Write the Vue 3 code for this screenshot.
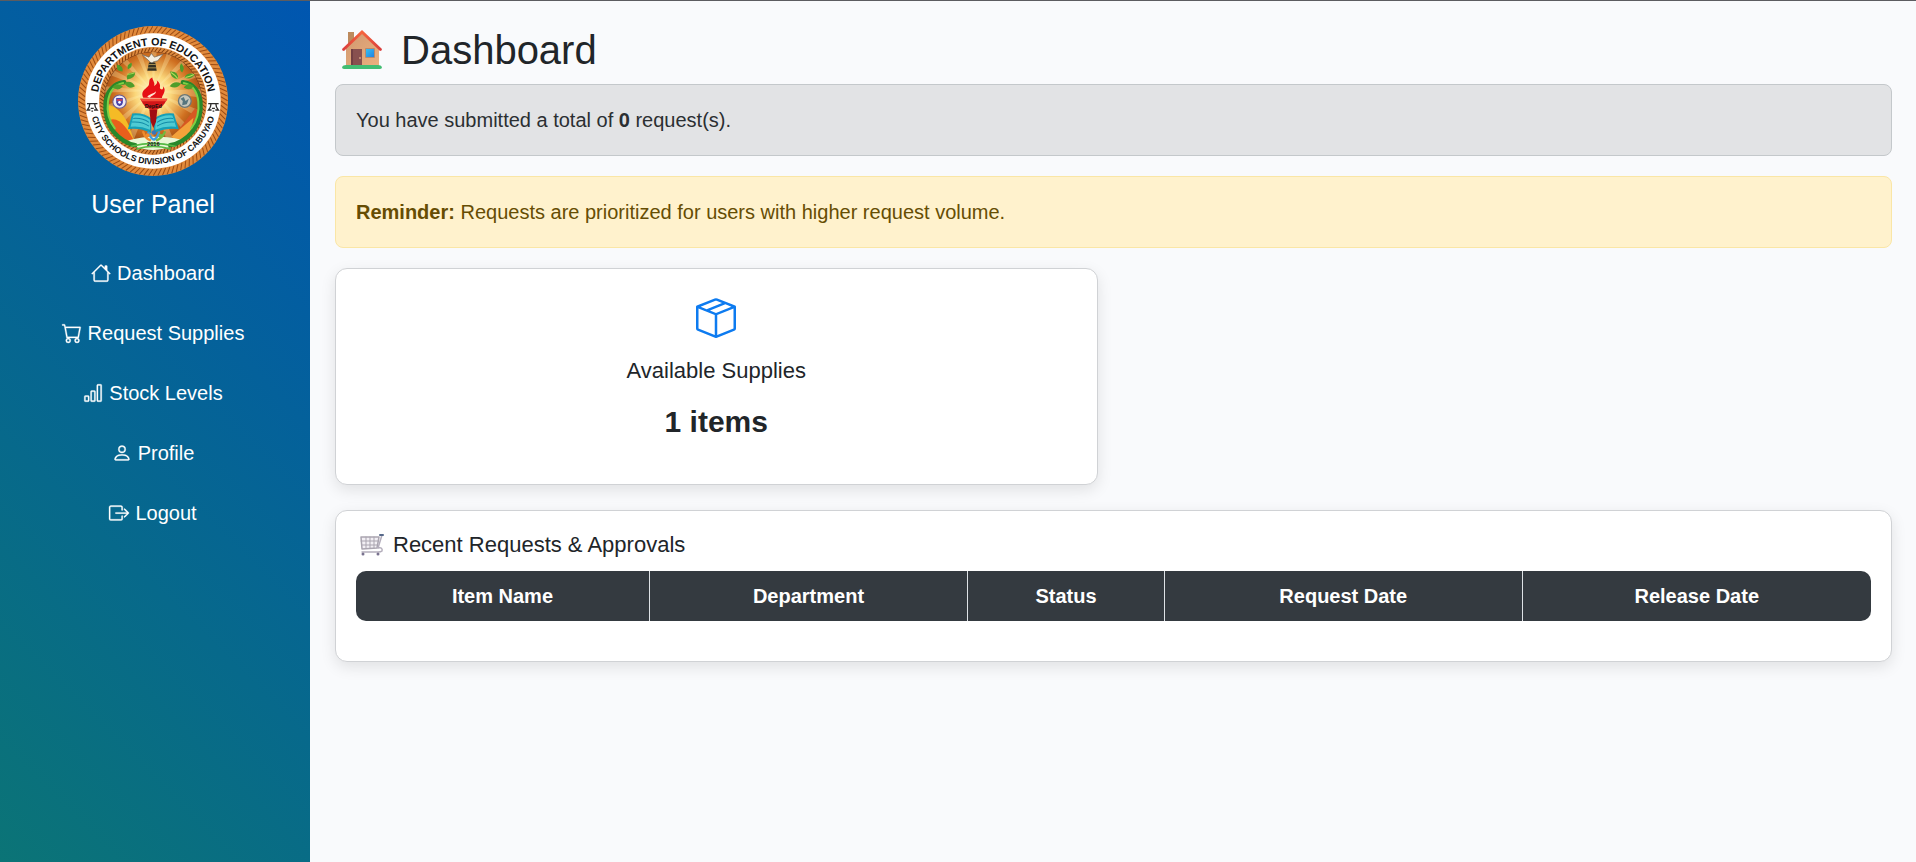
<script setup>
const links = [
  {
    label: 'Dashboard',
    icon: 'M8.707 1.5a1 1 0 0 0-1.414 0L.646 8.146a.5.5 0 0 0 .708.708L2 8.207V13.5A1.5 1.5 0 0 0 3.5 15h9a1.5 1.5 0 0 0 1.5-1.5V8.207l.646.647a.5.5 0 0 0 .708-.708L13 5.793V2.5a.5.5 0 0 0-.5-.5h-1a.5.5 0 0 0-.5.5v1.293zM13 7.207V13.5a.5.5 0 0 1-.5.5h-9a.5.5 0 0 1-.5-.5V7.207l5-5z',
  },
  {
    label: 'Request Supplies',
    icon: 'M0 1.5A.5.5 0 0 1 .5 1H2a.5.5 0 0 1 .485.379L2.89 3H14.5a.5.5 0 0 1 .491.592l-1.5 8A.5.5 0 0 1 13 12H4a.5.5 0 0 1-.491-.408L2.01 3.607 1.61 2H.5a.5.5 0 0 1-.5-.5M3.102 4l1.313 7h8.17l1.313-7zM5 12a2 2 0 1 0 0 4 2 2 0 0 0 0-4m7 0a2 2 0 1 0 0 4 2 2 0 0 0 0-4m-7 1a1 1 0 1 1 0 2 1 1 0 0 1 0-2m7 0a1 1 0 1 1 0 2 1 1 0 0 1 0-2',
  },
  {
    label: 'Stock Levels',
    icon: 'M4 11H2v3h2zm5-4H7v7h2zm5-5v12h-2V2zm-2-1a1 1 0 0 0-1 1v12a1 1 0 0 0 1 1h2a1 1 0 0 0 1-1V2a1 1 0 0 0-1-1zM6 7a1 1 0 0 1 1-1h2a1 1 0 0 1 1 1v7a1 1 0 0 1-1 1H7a1 1 0 0 1-1-1zm-5 4a1 1 0 0 1 1-1h2a1 1 0 0 1 1 1v3a1 1 0 0 1-1 1H2a1 1 0 0 1-1-1z',
  },
  {
    label: 'Profile',
    icon: 'M8 8a3 3 0 1 0 0-6 3 3 0 0 0 0 6m2-3a2 2 0 1 1-4 0 2 2 0 0 1 4 0m4 8c0 1-1 1-1 1H3s-1 0-1-1 1-4 6-4 6 3 6 4m-1-.004c-.001-.246-.154-.986-.832-1.664C11.516 10.68 10.289 10 8 10s-3.516.68-4.168 1.332c-.678.678-.83 1.418-.832 1.664z',
  },
  {
    label: 'Logout',
    icon: 'M10 12.5a.5.5 0 0 1-.5.5h-8a.5.5 0 0 1-.5-.5v-9a.5.5 0 0 1 .5-.5h8a.5.5 0 0 1 .5.5v2a.5.5 0 0 0 1 0v-2A1.5 1.5 0 0 0 9.5 2h-8A1.5 1.5 0 0 0 0 3.5v9A1.5 1.5 0 0 0 1.5 14h8a1.5 1.5 0 0 0 1.5-1.5v-2a.5.5 0 0 0-1 0zM15.854 8.354a.5.5 0 0 0 0-.708l-3-3a.5.5 0 0 0-.708.708L14.293 7.5H5.5a.5.5 0 0 0 0 1h8.793l-2.147 2.146a.5.5 0 0 0 .708.708z',
  },
]

const columns = [
  { label: 'Item Name', share: 'w-item' },
  { label: 'Department', share: 'w-dept' },
  { label: 'Status', share: 'w-status' },
  { label: 'Request Date', share: 'w-request' },
  { label: 'Release Date', share: 'w-release' },
]
const requestCount = 0
const itemCount = 1

// Slanted strands of the two rope rings on the seal
function strands(count, inner, outer, twist) {
  let d = ''
  for (let i = 0; i < count; i++) {
    const a = (i / count) * Math.PI * 2
    const b = a + twist
    d += `M${(249 + Math.cos(a) * inner).toFixed(1)} ${(254 + Math.sin(a) * inner).toFixed(1)}L${(249 + Math.cos(b) * outer).toFixed(1)} ${(254 + Math.sin(b) * outer).toFixed(1)}`
  }
  return d
}
const outerRope = strands(100, 203, 223, 0.06)
const innerRope = strands(90, 147, 159, 0.05)
</script>

<template>
  <div class="layout">
    <aside class="sidebar">
      <svg class="seal" viewBox="25 30 448 448" role="img" aria-label="Division seal">
        <defs>
          <radialGradient id="glow" cx="0.5" cy="0.42" r="0.6">
            <stop offset="0" stop-color="#fffbe0" />
            <stop offset="0.3" stop-color="#fbd77b" />
            <stop offset="0.65" stop-color="#cf6f20" />
            <stop offset="1" stop-color="#7b360b" />
          </radialGradient>
          <clipPath id="disc"><circle cx="249" cy="254" r="146" /></clipPath>
          <path id="arc-top" d="M83 254A166 166 0 0 1 415 254" />
          <path id="arc-bottom" d="M60 254A189 189 0 0 0 438 254" />
        </defs>
        <circle cx="249" cy="254" r="224" fill="#e18a3c" />
        <path :d="outerRope" stroke="#9c4c14" stroke-width="3" />
        <circle cx="249" cy="254" r="202" fill="#fff" />
        <circle cx="249" cy="254" r="161" fill="#dd8a3f" />
        <path :d="innerRope" stroke="#84400f" stroke-width="3" />
        <circle cx="249" cy="254" r="147" fill="#6b3010" />
        <g clip-path="url(#disc)">
          <circle cx="249" cy="254" r="146" fill="url(#glow)" />
          <circle cx="249" cy="225" r="90" fill="none" stroke="#fff3b4" stroke-opacity="0.3" stroke-width="180" stroke-dasharray="12 23" />
          <path d="M104 268C130 260 158 285 178 330L195 378L150 380L104 325Z" fill="#f5bb26" />
          <path d="M120 310C150 300 175 340 194 376L166 374C142 362 128 342 120 310Z" fill="#e95f1c" />
          <path d="M298 375L375 276L400 292L374 350L322 392Z" fill="#d65822" />
          <path d="M304 360L370 304L360 350L326 382Z" fill="#f3a23a" />
          <path d="M160 378C205 356 294 356 342 372L320 400H180Z" fill="#e9f7d5" />
        </g>
        <g fill="none" stroke-linecap="round">
          <path d="M163 198C95 205 93 300 133 348C148 367 175 383 196 386" stroke="#28882a" stroke-width="13" />
          <path d="M160 200C106 211 101 292 135 336" stroke="#80d044" stroke-width="6" />
          <path d="M338 198C404 205 404 300 365 348C350 367 323 383 300 386" stroke="#28882a" stroke-width="13" />
          <path d="M341 200C394 211 396 292 363 336" stroke="#80d044" stroke-width="6" />
          <path d="M185 389Q249 372 315 389M202 397Q249 382 300 397" stroke="#56b946" stroke-width="5" />
        </g>
        <g fill="#4e9d2a">
          <path d="M172 190Q166 166 196 169Q196 186 172 190ZM158 166Q136 165 142 145Q162 150 158 166ZM128 214Q140 195 159 211Q146 226 128 214ZM163 200Q184 190 195 210Q177 222 163 200ZM174 159Q169 145 185 140Q189 155 174 159Z" />
          <path d="M324 188Q303 188 300 166Q325 164 324 188ZM336 169Q324 157 333 141Q347 154 336 169ZM343 184Q351 166 374 174Q361 193 343 184ZM299 210Q312 191 333 202Q320 221 299 210ZM341 214Q354 195 371 210Q358 226 341 214Z" />
        </g>
        <path d="M172 174Q184 174 194 170M303 169Q314 176 323 187M346 184Q360 181 371 175" fill="none" stroke="#b7df59" stroke-width="3" />
        <!-- bird and bell -->
        <path d="M217 116L237 123L244 112L253 123L279 114L263 134L250 137L247 145L239 136Z" fill="#f3eee0" stroke="#6c665e" stroke-width="2" />
        <path d="M237 139H256L260 164H232Z" fill="#333024" />
        <path d="M236 145H257M234 155H259" stroke="#ddbd64" stroke-width="2" />
        <!-- small seals -->
        <circle cx="149" cy="256" r="20" fill="#eee9f4" stroke="#68598e" stroke-width="3" />
        <path d="M139 245H159V259Q158 267 149 270Q140 267 139 259Z" fill="#4843ab" />
        <path d="M141 251H157" stroke="#d44352" stroke-width="5" />
        <circle cx="149" cy="258" r="4" fill="#fff" />
        <circle cx="344" cy="254" r="19" fill="#c7c7bc" stroke="#6d7775" stroke-width="4" />
        <path d="M331 247L341 242L346 254L356 247L350 264L336 267L338 254Z" fill="#56757e" />
        <!-- open book -->
        <path d="M187 291Q222 288 244 306V350Q211 334 174 338Z" fill="#159fb7" />
        <path d="M311 291Q276 288 252 306V350Q286 334 326 338Z" fill="#159fb7" />
        <path d="M191 297Q220 294 240 310V340Q210 327 182 331ZM307 297Q278 294 256 310V340Q286 327 318 331Z" fill="#50cbd3" />
        <path d="M190 306Q218 304 237 318M186 317Q215 314 237 329M309 306Q282 304 261 318M313 317Q284 314 261 329" fill="none" stroke="#128ba7" stroke-width="3" />
        <!-- torch -->
        <path d="M238 279H262L258 316L250 335L242 316Z" fill="#a10d12" />
        <path d="M211 247H292L284 261Q272 280 250 281Q228 278 218 261Z" fill="#d21618" />
        <path d="M211 247H292L288 255H215Z" fill="#f34a35" />
        <path d="M220 244C209 221 235 216 237 204C239 194 236 188 247 184C247 192 257 201 252 209C262 204 263 197 260 192C279 207 263 216 274 219C280 222 281 211 277 208C294 223 274 239 276 245Z" fill="#e61014" />
        <path d="M232 242C236 234 250 233 258 225C257 236 246 236 240 244Z" fill="#ffe5d2" />
        <text x="250" y="276" text-anchor="middle" class="tiny">DepEd</text>
        <!-- people -->
        <g fill="none" stroke-width="7" stroke-linecap="round">
          <path d="M220 347Q226 366 240 371" stroke="#ef8b2b" />
          <path d="M235 349Q245 370 252 369Q260 367 267 348" stroke="#3d9ee3" />
          <path d="M284 347Q276 364 261 371" stroke="#73b83e" />
        </g>
        <circle cx="233" cy="356" r="6" fill="#ef8b2b" />
        <circle cx="252" cy="348" r="7" fill="#3975bd" />
        <circle cx="272" cy="358" r="6" fill="#73b83e" />
        <text x="250" y="389" text-anchor="middle" class="year">2016</text>
        <!-- bells on the white band -->
        <g fill="none" stroke="#302e2d" stroke-width="4">
          <path d="M52 262H83M60 264Q60 273 53 281H62M75 264Q75 273 82 281H73M63 276H72M65 284H70" />
          <path d="M414 262H445M422 264Q422 273 415 281H424M437 264Q437 273 444 281H435M425 276H434M427 284H432" />
        </g>
        <text class="ring ring-top" text-anchor="middle">
          <textPath href="#arc-top" startOffset="50%">DEPARTMENT OF EDUCATION</textPath>
        </text>
        <text class="ring ring-bottom" text-anchor="middle">
          <textPath href="#arc-bottom" startOffset="50%">CITY SCHOOLS DIVISION OF CABUYAO</textPath>
        </text>
      </svg>
      <h2 class="panel-name">User Panel</h2>
      <nav class="nav">
        <a v-for="link in links" :key="link.label" href="#" class="nav-link">
          <svg class="nav-icon" viewBox="0 0 16 16" aria-hidden="true"><path :d="link.icon" /></svg>
          <span>{{ link.label }}</span>
        </a>
      </nav>
    </aside>

    <main class="main">
      <h1 class="title">
        <svg class="house" viewBox="0 0 40 40" aria-hidden="true">
          <defs>
            <linearGradient id="wall" x1="0" x2="1" y1="0" y2="1">
              <stop offset="0" stop-color="#cf9870" />
              <stop offset="1" stop-color="#eeb17f" />
            </linearGradient>
            <linearGradient id="roof" x1="0" x2="1">
              <stop offset="0" stop-color="#d93b3c" />
              <stop offset="0.5" stop-color="#f5653d" />
              <stop offset="1" stop-color="#d83a3b" />
            </linearGradient>
            <linearGradient id="pane" x1="0" x2="1" y1="0" y2="1">
              <stop offset="0" stop-color="#35c0f2" />
              <stop offset="1" stop-color="#2382e2" />
            </linearGradient>
          </defs>
          <path d="M6 2H12V16H6Z" fill="#bd8a5d" />
          <path d="M4 18L20 3L37 19V37H4Z" fill="url(#wall)" />
          <path d="M0 19L20 0L40 19Q40 21 38 21L20 4L2 21Q0 21 0 19Z" fill="url(#roof)" />
          <path d="M9 19H20V36H9Z" fill="#88504f" />
          <path d="M9 19H11V36H9Z" fill="#713f43" />
          <circle cx="18" cy="28" r="1" fill="#d29c80" />
          <rect x="23" y="18" width="10" height="10" rx="1" fill="#b9896c" />
          <rect x="24" y="19" width="8" height="8" fill="url(#pane)" />
          <path d="M0 37Q1 35 4 35H36Q39 35 40 37Q40 39 38 39H2Q0 39 0 37Z" fill="#43bd73" />
        </svg>
        Dashboard
      </h1>

      <div class="alert alert-secondary" role="alert">
        You have submitted a total of <strong>{{ requestCount }}</strong> request(s).
      </div>
      <div class="alert alert-warning" role="alert">
        <strong>Reminder:</strong> Requests are prioritized for users with higher request volume.
      </div>

      <div class="stats">
        <section class="card stat">
          <svg class="box" viewBox="0 0 16 16" aria-hidden="true">
            <path d="M8.186 1.113a.5.5 0 0 0-.372 0L1.846 3.5l2.404.961L10.404 2zm3.564 1.426L5.596 5 8 5.961 14.154 3.5zm3.25 1.7-6.5 2.6v7.922l6.5-2.6V4.24zM7.5 14.762V6.838L1 4.239v7.923zM7.443.184a1.5 1.5 0 0 1 1.114 0l7.129 2.852A.5.5 0 0 1 16 3.5v8.662a1 1 0 0 1-.629.928l-7.185 2.874a.5.5 0 0 1-.372 0L.63 13.09a1 1 0 0 1-.63-.928V3.5a.5.5 0 0 1 .314-.464z" />
          </svg>
          <h2 class="stat-title">Available Supplies</h2>
          <p class="stat-value">{{ itemCount }} items</p>
        </section>
      </div>

      <section class="card requests">
        <h2 class="requests-title">
          <svg class="cart" viewBox="0 0 24 24" aria-hidden="true">
            <g fill="none" stroke-linecap="round" stroke-linejoin="round">
              <path d="M1 4H19L17 15L2 16Z" fill="#f2eff4" stroke="#aaa5b0" stroke-width="1.5" />
              <path d="M1 8H18M2 12H17M6 4V15M10 4V15M14 4V15" stroke="#aaa5b0" />
              <path d="M22 2L18 15Q23 14 22 18Q21 19 18 19H2" stroke="#b4aebc" stroke-width="1.5" />
              <path d="M20 2H23" stroke="#56698a" stroke-width="2" />
            </g>
            <circle cx="3" cy="21" r="1.5" fill="#79728f" />
            <circle cx="18" cy="21" r="1.5" fill="#79728f" />
          </svg>
          Recent Requests &amp; Approvals
        </h2>
        <table class="table">
          <thead>
            <tr>
              <th v-for="col in columns" :key="col.label" scope="col" :class="col.share">{{ col.label }}</th>
            </tr>
          </thead>
        </table>
      </section>
    </main>
  </div>
</template>

<style>
body {
  margin: 0;
  background: #f8f9fa;
}
</style>

<style scoped>
* {
  box-sizing: border-box;
}
.layout {
  display: flex;
  box-sizing: border-box;
  min-height: 100vh;
  border-top: 1px solid #5c5c60;
  background: #f9fafc;
  color: #212529;
  font-family: Arial, "Liberation Sans", sans-serif;
  font-size: 20px;
  line-height: 30px;
}
.sidebar {
  display: flex;
  flex: none;
  flex-direction: column;
  align-items: center;
  width: 310px;
  padding: 25px 4px 25px 0;
  background: linear-gradient(45deg, #0b7476, #0056b0);
  color: #fff;
}
.seal {
  width: 150px;
  height: 150px;
}
.ring,
.tiny,
.year {
  font-weight: 700;
  fill: #111;
}
.ring-top {
  font-size: 32px;
}
.ring-bottom {
  font-size: 26px;
}
.tiny {
  font-size: 16px;
}
.year {
  font-size: 17px;
}
.panel-name {
  margin: 13px 0 24px;
  font-size: 25px;
  font-weight: 400;
  line-height: 30px;
}
.nav {
  display: flex;
  flex-direction: column;
  width: 100%;
}
.nav-link {
  display: flex;
  align-items: center;
  justify-content: center;
  gap: 6px;
  padding: 15px;
  color: #fff;
  text-decoration: none;
}
.nav-icon {
  width: 20px;
  height: 20px;
  overflow: visible;
  fill: currentColor;
  stroke: currentColor;
  stroke-width: 0.25;
}
.main {
  flex: 1;
  min-width: 0;
  padding: 25px 24px 25px 25px;
}
.title {
  display: flex;
  align-items: center;
  gap: 19px;
  margin: 0 0 10px;
  padding-left: 7px;
  font-size: 40px;
  font-weight: 400;
  line-height: 48px;
}
.house {
  width: 40px;
  height: 40px;
}
.alert {
  margin-bottom: 20px;
  padding: 20px;
  border: 1px solid;
  border-radius: 8px;
}
.alert-secondary {
  border-color: #c4c8cb;
  background: #e2e3e5;
  color: #2b2f32;
}
.alert-warning {
  border-color: #fae6a6;
  background: #fff2cd;
  color: #664d03;
}
.card {
  border: 1px solid #d0d2d5;
  border-radius: 12px;
  background: #fff;
  box-shadow: 0 5px 15px rgba(0, 0, 0, 0.1);
}
.stats {
  display: grid;
  grid-template-columns: 1fr 1fr;
  gap: 32px;
  margin-bottom: 25px;
}
.stat {
  display: flex;
  flex-direction: column;
  align-items: center;
  gap: 19px;
  padding: 29px 20px 44px;
}
.box {
  width: 40px;
  height: 40px;
  fill: #0d7bf0;
}
.stat-title {
  margin: 0;
  font-size: 22px;
  font-weight: 400;
  line-height: 28px;
}
.stat-value {
  margin: 0;
  font-size: 30px;
  font-weight: 700;
  line-height: 36px;
}
.requests {
  padding: 20px;
}
.requests-title {
  display: flex;
  align-items: center;
  gap: 9px;
  margin: 0 0 12px;
  padding-left: 4px;
  font-size: 22px;
  font-weight: 400;
  line-height: 28px;
}
.cart {
  width: 24px;
  height: 24px;
}
.table {
  width: 100%;
  margin-bottom: 20px;
  border-spacing: 0;
  border-radius: 10px;
  overflow: hidden;
  table-layout: fixed;
}
th {
  padding: 10px;
  border-right: 1px solid #dee2e6;
  background: #343a40;
  color: #fff;
  font-weight: 700;
  text-align: center;
}
th:last-child {
  border-right: 0;
}
.w-item {
  width: 19.4%;
}
.w-dept {
  width: 21%;
}
.w-status {
  width: 13%;
}
.w-request {
  width: 23.6%;
}
.w-release {
  width: 23%;
}
</style>
